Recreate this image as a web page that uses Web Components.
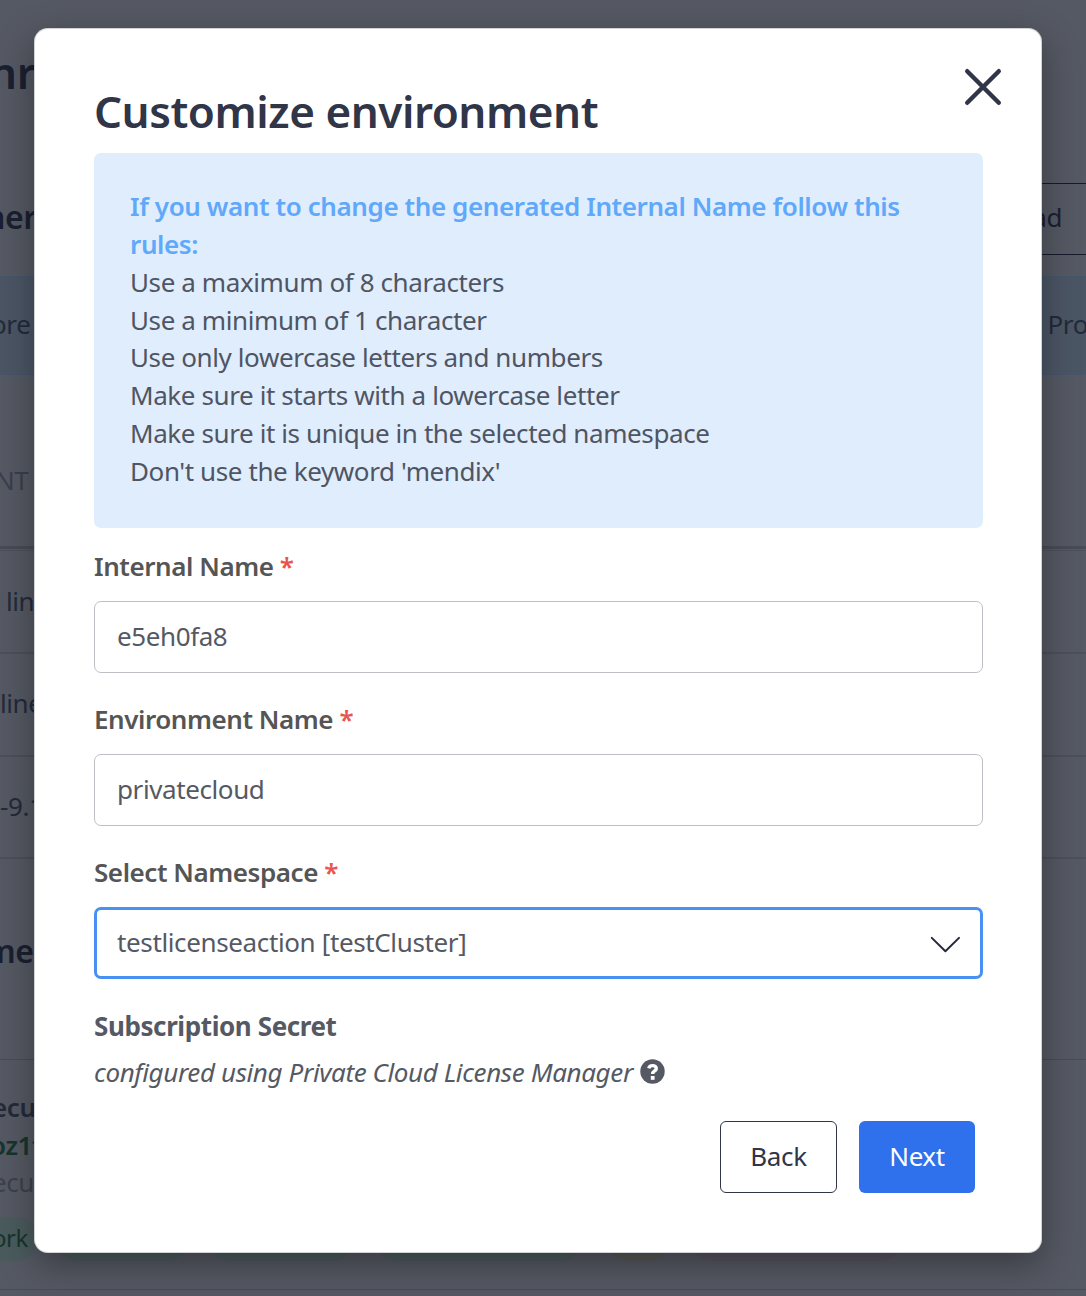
<!DOCTYPE html>
<html lang="en">
<head>
<meta charset="utf-8">
<title>Customize environment</title>
<style>
html,body{margin:0;height:1296px;overflow:hidden;background:#555963}
body{font-family:"Noto Sans",sans-serif;font-size:26px;line-height:38px;letter-spacing:-.4px;color:#555963}
</style>
</head>
<body>
<env-page></env-page>
<modal-dialog heading="Customize environment">
  <rules-alert>
    <span slot="title">If you want to change the generated Internal Name follow this rules:</span>
    <div>Use a maximum of 8 characters</div>
    <div>Use a minimum of 1 character</div>
    <div>Use only lowercase letters and numbers</div>
    <div>Make sure it starts with a lowercase letter</div>
    <div>Make sure it is unique in the selected namespace</div>
    <div>Don't use the keyword 'mendix'</div>
  </rules-alert>
  <form-field label="Internal Name">e5eh0fa8</form-field>
  <form-field label="Environment Name">privatecloud</form-field>
  <form-field label="Select Namespace" select>testlicenseaction [testCluster]</form-field>
  <secret-info label="Subscription Secret">configured using Private Cloud License Manager</secret-info>
  <dialog-button slot="actions">Back</dialog-button>
  <dialog-button slot="actions" primary>Next</dialog-button>
</modal-dialog>
<script>
class Base extends HTMLElement {
  constructor() {
    super();
    this.attachShadow({ mode: "open" });
  }
  connectedCallback() {
    this.shadowRoot.innerHTML = this.render();
  }
}

/* Page behind the dialog, already dimmed by the backdrop. */
customElements.define("env-page", class extends Base {
  render() {
    return `<style>
:host{display:flex;flex-direction:column;height:1296px;overflow:hidden;color:#232a3a}
div{box-sizing:border-box;flex:none;white-space:nowrap}
.row{display:flex;align-items:center;justify-content:space-between}
.b{font-weight:600}
.title{height:146px;font-size:44px;color:#1a2031;padding-bottom:2px}
.head{height:130px}
.head .b{font-size:32px;color:#1a2031}
.btn{height:72px;width:90px;margin-right:-4px;border:1px solid #151b2b;border-right:0;display:flex;align-items:center;justify-content:flex-end;padding:0 28px 3px 0;color:#1a2031}
.band{height:99px;background:#4b5665;border:solid #46566c;border-width:1px 0;padding-bottom:3px}
.th{height:174px;border-bottom:3px solid #484c57;color:#3a3f4d;padding-top:38px}
.thin{height:2px;border-bottom:1px solid #4c505b}
.tr{height:103px;border-bottom:2px solid #4c505b;padding-bottom:2px}
.sec{height:201px;border-bottom:1px solid #484c57;font-size:32px;color:#1a2031;padding-bottom:16px}
.item{height:157px;padding-top:28px}
.item div{height:37.5px}
.pills{display:flex;height:73px;border-bottom:1px solid #484c57}
.pills div{height:44px;border-radius:22px;background:#4b5b5d}
</style>
<div class="row title b"><span style="margin-left:-11px">nr</span></div>
<div class="row head"><span class="b" style="margin:12px 0 0 -15px">ner</span><div class="btn" style="margin-top:15px">ad</div></div>
<div class="row band"><span style="margin-left:-9px">ore</span><span style="margin-right:-2px">Pro</span></div>
<div class="row th"><span style="margin-left:-5px">NT</span></div>
<div class="thin"></div>
<div class="row tr"><span style="margin-left:6px">lin</span></div>
<div class="row tr" style="padding-bottom:3px"><span>line</span></div>
<div class="row tr" style="height:102px"><span>-9.1</span></div>
<div class="row sec b"><span style="margin-left:-15px">me</span></div>
<div class="item">
<div class="b" style="margin-left:-8px">ecu</div>
<div class="b" style="margin-left:-10px;color:#17352c">oz1f</div>
<div style="margin-left:-8px;color:#3c414e">ecu</div></div>
<div class="pills">
<div style="width:59px;margin-left:-21px;padding:2px 10px 0 0;text-align:right;font-size:24px;color:#17352c">ork</div>
<div style="width:131px;margin-left:19px"></div>
<div style="width:146px;margin-left:21px"></div>
<div style="width:207px;margin-left:20px"></div>
<div style="width:67px;margin-left:23px;background:#575757"></div>
<div style="width:214px;margin-left:18px;background:#585360"></div>
</div>`;
  }
});

customElements.define("modal-dialog", class extends Base {
  render() {
    return `<style>
:host{position:absolute;left:34px;top:28px;box-sizing:border-box;width:1008px;height:1225px;display:flex;flex-direction:column;padding:0 59px 0 60px;background:#fff;border-radius:14px;box-shadow:inset 0 0 0 1px rgba(50,55,70,.22),0 12px 36px rgba(0,0,0,.35)}
header{height:125px;display:flex;justify-content:space-between;box-sizing:border-box}
h1{margin:54px 0 0;font-size:44px;letter-spacing:-.46px;line-height:58px;font-weight:600;color:#303547;white-space:nowrap}
svg{width:38px;height:38px;margin:40px -19px 0 0}
footer{display:flex;justify-content:flex-end;gap:22px;margin:30px 8px 0 0}
</style>
<header><h1>${this.getAttribute("heading")}</h1>
<svg viewBox="0 0 38 38"><path d="M3.2 3.2 34.8 34.8M34.8 3.2 3.2 34.8" fill="none" stroke="#303547" stroke-width="4.4" stroke-linecap="round"/></svg></header>
<slot></slot>
<footer><slot name="actions"></slot></footer>`;
  }
});

customElements.define("rules-alert", class extends Base {
  render() {
    return `<style>
:host{display:block;box-sizing:border-box;height:375px;padding:35.3px 36px 0;background:#e0edfd;border-radius:7px;line-height:37.8px;color:#4f5563}
b{display:block;font-weight:600;color:#60a8fa}
</style><b><slot name="title"></slot></b><slot></slot>`;
  }
});

customElements.define("form-field", class extends Base {
  render() {
    const select = this.hasAttribute("select");
    return `<style>
:host{display:block;margin-top:28px}
:host(:nth-of-type(1)){margin-top:20px}
label{display:block;line-height:36px;font-weight:600;letter-spacing:-.44px;color:#555;margin-bottom:17px}
i{font-style:normal;color:#ea5450}
.box{box-sizing:border-box;height:72px;display:flex;align-items:center;justify-content:space-between;border:1px solid #bebfc5;border-radius:7px;padding:0 22px 2px}
:host([select]) .box{border:3px solid #4890f2;padding:0 20px 2px 20px;letter-spacing:-.37px}
svg{width:30px;height:18px;margin-top:5px}
</style><label>${this.getAttribute("label")} <i>*</i></label>
<div class="box"><span><slot></slot></span>${select ? '<svg viewBox="0 0 30 18"><path d="M1.8 1.9 15.4 15.2 29 1.9" fill="none" stroke="#242a3a" stroke-width="2" stroke-linecap="round" stroke-linejoin="round"/></svg>' : ""}</div>`;
  }
});

customElements.define("secret-info", class extends Base {
  render() {
    return `<style>
:host{display:block;margin-top:28px}
b{display:block;line-height:38px;font-weight:700;margin-bottom:9px}
div{display:flex;align-items:center;gap:7px;letter-spacing:-.38px}
em{white-space:nowrap;margin-top:-1px}
svg{width:25px;height:25px;margin-top:-3px}
</style><b>${this.getAttribute("label")}</b>
<div><em><slot></slot></em><svg viewBox="0 0 25 25"><circle cx="12.5" cy="12.5" r="12.2" fill="#555963"/><path d="M8.8 9.4C9.2 7.3 10.8 6.6 12.6 6.6c2 0 3.7 1.1 3.7 2.9 0 2.6-3.6 2.4-3.6 5.4" fill="none" stroke="#fff" stroke-width="3.4"/><path d="M10.8 17h3.8v3.8h-3.8z" fill="#fff"/></svg></div>`;
  }
});

customElements.define("dialog-button", class extends Base {
  render() {
    return `<style>
:host{display:flex;align-items:center;justify-content:center;box-sizing:border-box;width:117px;height:72px;padding-bottom:2px;border:1px solid #303547;border-radius:6px;color:#303547;font-weight:450}
:host([primary]){width:116px;border:0;background:#2f70ed;color:#fff}
</style><slot></slot>`;
  }
});
</script>
</body>
</html>
